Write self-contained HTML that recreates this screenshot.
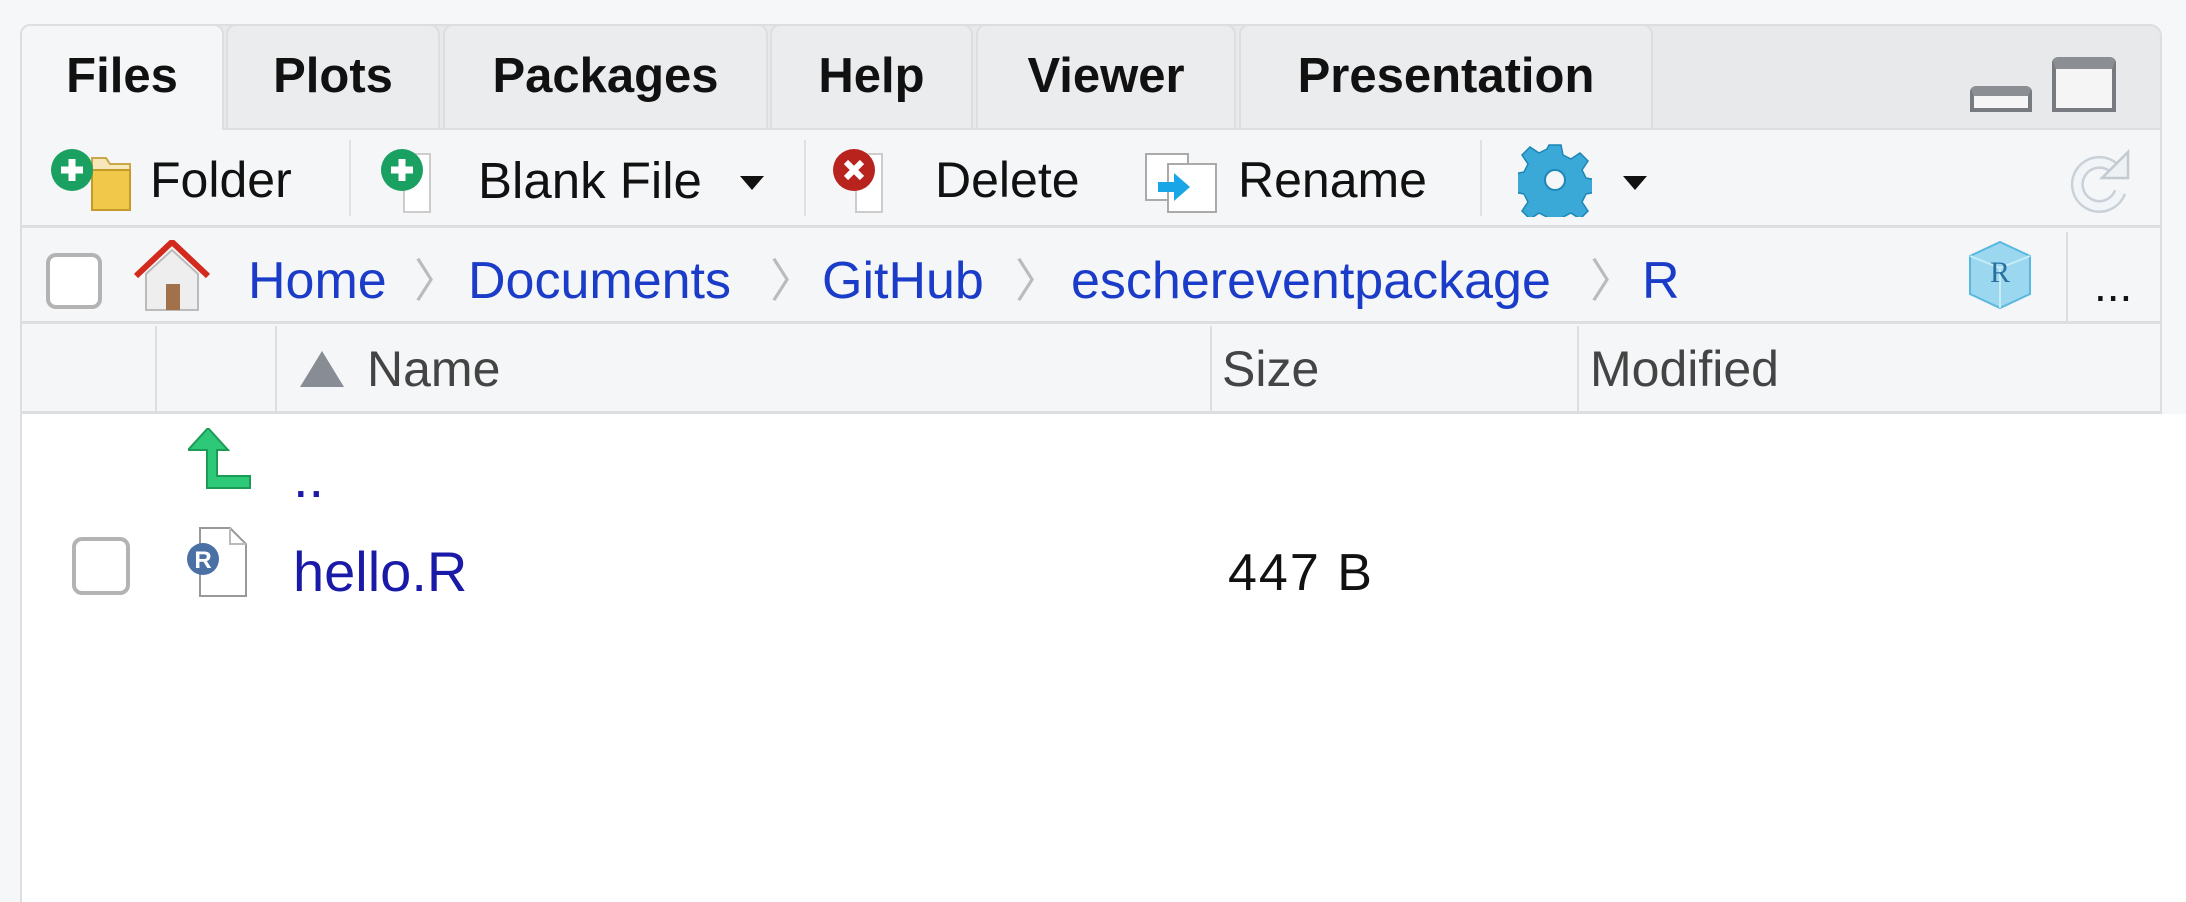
<!DOCTYPE html>
<html><head><meta charset="utf-8"><style>
*{margin:0;padding:0;box-sizing:border-box}
body{width:2186px;height:902px;background:#f6f7f8;position:relative;overflow:hidden;font-family:"Liberation Sans",sans-serif}
.a{position:absolute}
.tab{position:absolute;top:24px;height:104px;background:#ebecee;border:2px solid #dcdee1;border-bottom:none;border-radius:10px 10px 0 0;font-weight:bold;font-size:49px;color:#111;text-align:center;line-height:100px}
.t{position:absolute;white-space:nowrap;line-height:1}
.sep{position:absolute;width:2px;background:#dfe2e5}
.bc{color:#1a3cc8;font-size:52px}
.chev{color:#b9bcbf;font-size:46px}
.hd{color:#444;font-size:50px}
</style></head><body>
<div class="a" style="left:20px;top:24px;width:2142px;height:104px;background:#e8e9eb;border:2px solid #dcdee1;border-bottom:none;border-radius:12px 12px 0 0"></div>
<div class="tab" style="left:20px;width:204px;background:#f4f6f7;height:106px;z-index:2">Files</div>
<div class="tab" style="left:226px;width:214px">Plots</div>
<div class="tab" style="left:443px;width:325px">Packages</div>
<div class="tab" style="left:770px;width:203px">Help</div>
<div class="tab" style="left:976px;width:260px">Viewer</div>
<div class="tab" style="left:1239px;width:414px">Presentation</div>
<div class="a" style="left:1970px;top:86px;width:62px;height:26px;border:4px solid #777a7e;border-top:10px solid #8b8e92;border-radius:6px 6px 0 0;background:#f5f5f5"></div>
<div class="a" style="left:2052px;top:57px;width:64px;height:55px;border:4px solid #777a7e;border-top:12px solid #8b8e92;border-radius:6px 6px 0 0;background:#f5f5f5"></div>
<div class="a" style="left:20px;top:128px;width:2142px;height:100px;background:#f4f6f7;border-left:2px solid #dcdee1;border-right:2px solid #dcdee1;border-top:2px solid #dcdee1;border-bottom:3px solid #dcdee1"></div>
<svg class="a" style="left:48px;top:148px" width="90" height="66" viewBox="0 0 90 66"><path d="M44 10h14l4 6h20v46H44z" fill="#f6e8b8" stroke="#c9a84a" stroke-width="2"/><path d="M44 22h38v40H44z" fill="#f2c84a" stroke="#c49a2a" stroke-width="2"/><circle cx="24" cy="22" r="21" fill="#1aa060"/><path d="M24 11v22M13 22h22" stroke="#fff" stroke-width="7"/></svg>
<div class="t" style="left:150px;top:155px;font-size:50px;color:#111">Folder</div>
<div class="sep" style="left:349px;top:140px;height:76px"></div>
<svg class="a" style="left:380px;top:148px" width="86" height="66" viewBox="0 0 86 66"><rect x="24" y="6" width="26" height="58" fill="#fff" stroke="#ccc" stroke-width="2"/><circle cx="22" cy="22" r="21" fill="#1aa060"/><path d="M22 11v22M11 22h22" stroke="#fff" stroke-width="7"/></svg>
<div class="t" style="left:478px;top:155px;font-size:51px;color:#111">Blank File</div>
<svg class="a" style="left:740px;top:176px" width="24" height="14"><path d="M0 0h24L12 14z" fill="#111"/></svg>
<div class="sep" style="left:804px;top:140px;height:76px"></div>
<svg class="a" style="left:832px;top:148px" width="86" height="66" viewBox="0 0 86 66"><rect x="24" y="6" width="26" height="58" fill="#fff" stroke="#ccc" stroke-width="2"/><circle cx="22" cy="22" r="21" fill="#b8231e"/><path d="M14 14l16 16M30 14L14 30" stroke="#fff" stroke-width="6"/></svg>
<div class="t" style="left:935px;top:155px;font-size:50px;color:#111">Delete</div>
<svg class="a" style="left:1144px;top:152px" width="74" height="62" viewBox="0 0 74 62"><rect x="2" y="2" width="42" height="46" fill="#fff" stroke="#aaa" stroke-width="2"/><rect x="24" y="12" width="48" height="48" fill="#fff" stroke="#aaa" stroke-width="2"/><path d="M14 30h16v-9l16 14-16 14v-9H14z" fill="#1aa6e6"/></svg>
<div class="t" style="left:1238px;top:155px;font-size:50px;color:#111">Rename</div>
<div class="sep" style="left:1480px;top:140px;height:76px"></div>
<svg class="a" style="left:1518px;top:143px" width="74" height="74" viewBox="-37 -37 74 74"><g fill="#3aa9d8" stroke="#1d86b5" stroke-width="1.5"><path d="M-6-35h12l2 10 8 4 9-6 8 8-6 9 4 8 10 2v12l-10 2-4 8 6 9-8 8-9-6-8 4-2 10H-6l-2-10-8-4-9 6-8-8 6-9-4-8-10-2V-6l10-2 4-8-6-9 8-8 9 6 8-4z"/></g><circle r="10" fill="#f4f6f7" stroke="#1d86b5" stroke-width="2"/></svg>
<svg class="a" style="left:1623px;top:176px" width="24" height="14"><path d="M0 0h24L12 14z" fill="#111"/></svg>
<svg class="a" style="left:2066px;top:146px" width="68" height="72" viewBox="0 0 68 72"><path d="M48 22A22 22 0 1 0 54 46" fill="none" stroke="#c9d0d8" stroke-width="13"/><path d="M48 22A22 22 0 1 0 54 46" fill="none" stroke="#f2f5f8" stroke-width="8"/><path d="M62 6v26H36z" fill="#eef1f4" stroke="#c3cad2" stroke-width="2.5"/></svg>
<div class="a" style="left:20px;top:228px;width:2142px;height:96px;background:#f4f6f7;border-left:2px solid #dcdee1;border-right:2px solid #dcdee1;border-bottom:3px solid #dcdee1"></div>
<div class="a" style="left:46px;top:253px;width:56px;height:56px;border:4px solid #b3b3b3;border-radius:10px;background:#fff"></div>
<svg class="a" style="left:132px;top:240px" width="80" height="72" viewBox="0 0 80 72"><path d="M14 34L40 10l26 24v36H14z" fill="#eee" stroke="#bbb" stroke-width="2"/><rect x="34" y="44" width="14" height="26" fill="#a0714a"/><path d="M4 36L40 2l36 34" fill="none" stroke="#d42a1e" stroke-width="6"/></svg>
<div class="t bc" style="left:248px;top:255px">Home</div>
<div class="t chev" style="left:414px;top:258px">〉</div>
<div class="t bc" style="left:468px;top:255px">Documents</div>
<div class="t chev" style="left:770px;top:258px">〉</div>
<div class="t bc" style="left:822px;top:255px">GitHub</div>
<div class="t chev" style="left:1015px;top:258px">〉</div>
<div class="t bc" style="left:1071px;top:255px">eschereventpackage</div>
<div class="t chev" style="left:1590px;top:258px">〉</div>
<div class="t bc" style="left:1642px;top:255px">R</div>
<svg class="a" style="left:1966px;top:240px" width="68" height="70" viewBox="0 0 68 70"><path d="M34 2l30 14v38L34 68 4 54V16z" fill="#9bd8f0" stroke="#5ab8e0" stroke-width="2"/><path d="M4 16l30 12 30-12M34 28v40" stroke="#c6ecf8" stroke-width="2" fill="none"/><text x="34" y="42" font-family="Liberation Serif,serif" font-size="30" fill="#2a6fa0" text-anchor="middle">R</text></svg>
<div class="sep" style="left:2066px;top:232px;height:90px;background:#dcdee1"></div>
<div class="t" style="left:2094px;top:262px;font-size:46px;color:#111">...</div>
<div class="a" style="left:20px;top:324px;width:2142px;height:90px;background:#f4f6f7;border-left:2px solid #dcdee1;border-right:2px solid #dcdee1;border-bottom:3px solid #dcdee1"></div>
<div class="sep" style="left:155px;top:326px;height:86px;background:#dcdee1"></div>
<div class="sep" style="left:275px;top:326px;height:86px;background:#dcdee1"></div>
<div class="sep" style="left:1210px;top:326px;height:86px;background:#dcdee1"></div>
<div class="sep" style="left:1577px;top:326px;height:86px;background:#dcdee1"></div>
<svg class="a" style="left:300px;top:351px" width="44" height="36"><path d="M22 0L44 36H0z" fill="#888c94"/></svg>
<div class="t hd" style="left:367px;top:344px">Name</div>
<div class="t hd" style="left:1222px;top:344px">Size</div>
<div class="t hd" style="left:1590px;top:344px">Modified</div>
<div class="a" style="left:20px;top:414px;width:2166px;height:488px;background:#fff;border-left:2px solid #dcdee1"></div>
<svg class="a" style="left:188px;top:428px" width="64" height="62" viewBox="0 0 64 62"><path d="M20 0l20 22H29v26h33v12H19V22H0z" fill="#2ec978" stroke="#1b9c56" stroke-width="2"/></svg>
<div class="t" style="left:293px;top:450px;font-size:56px;color:#1a1aa8">..</div>
<div class="a" style="left:72px;top:537px;width:58px;height:58px;border:4px solid #b3b3b3;border-radius:10px;background:#fff"></div>
<svg class="a" style="left:186px;top:526px" width="72" height="72" viewBox="0 0 72 72"><path d="M14 2h30l16 16v52H14z" fill="#fff" stroke="#999" stroke-width="2"/><path d="M44 2v16h16" fill="none" stroke="#bbb" stroke-width="2"/><circle cx="17" cy="33" r="16" fill="#4a70a4"/><text x="17" y="42" font-family="Liberation Sans,sans-serif" font-weight="bold" font-size="24" fill="#fff" text-anchor="middle">R</text></svg>
<div class="t" style="left:293px;top:544px;font-size:56px;color:#1a1aa8">hello.R</div>
<div class="t" style="left:1228px;top:547px;font-size:52px;color:#111;letter-spacing:2px">447 B</div>
</body></html>
